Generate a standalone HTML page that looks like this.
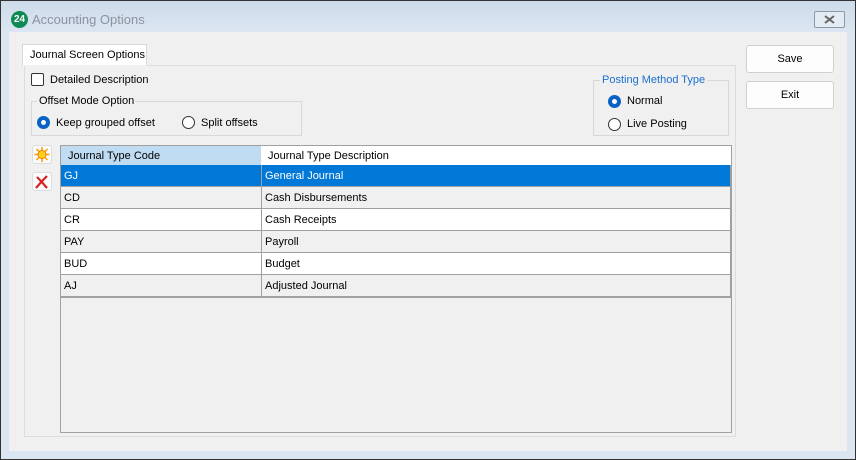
<!DOCTYPE html>
<html><head><style>
*{margin:0;padding:0;box-sizing:border-box}
body{width:856px;height:460px;position:relative;overflow:hidden;font-family:"Liberation Sans",sans-serif;font-size:11px;color:#000;background:#dbe6f2}
.a{position:absolute}
#frame{left:0;top:0;width:856px;height:460px;border:1px solid #333;background:linear-gradient(#cddbea,#dbe6f2 32px,#dbe6f2)}
#client{left:9px;top:32px;width:838px;height:419px;background:#f0f0f0}
.btn{background:#fdfdfd;border:1px solid #d0d0d0;border-radius:3px;text-align:center;line-height:27px;font-size:11px}
.grp{border:1px solid #d8d8d8}
.radio{width:13px;height:13px;border-radius:50%;border:1px solid #333;background:#fff}
.radio.on{border:4px solid #0a63c4;background:#fff}
.row{left:61px;width:670px;height:22px;border-bottom:1px solid #a0a0a0}
.row span{position:absolute;top:5px}
.c1{left:3px}.c2{left:204px}
.vl{position:absolute;left:200px;top:0;width:1px;height:100%;background:#a0a0a0}
</style></head><body>
<div id="frame" class="a"></div>
<div class="a" style="left:11px;top:11px;width:17px;height:17px;border-radius:50%;background:#0f8a55;color:#fff;font-size:10px;font-weight:bold;text-align:center;line-height:17px">24</div>
<div class="a" style="left:32px;top:12px;font-size:13px;color:#8a949e">Accounting Options</div>
<div class="a" style="left:814px;top:11px;width:31px;height:17px;border:1px solid #8a98a8;border-radius:2px;background:#e3ebf3"><svg width="29" height="15" style="position:absolute;left:0;top:0"><path d="M10 4 L19 11 M19 4 L10 11" stroke="#666" stroke-width="2"/></svg></div>
<div id="client" class="a"></div>
<div class="a" style="left:22px;top:44px;width:125px;height:22px;border:1px solid #d8d8d8;border-bottom:none;background:#fff;padding:4px 0 0 7px">Journal Screen Options</div>
<div class="a" style="left:24px;top:65px;width:712px;height:372px;border:1px solid #dcdcdc;background:#f0f0f0"></div>
<div class="a" style="left:24px;top:65px;width:123px;height:1px;background:#f0f0f0"></div>
<div class="a" style="left:31px;top:73px;width:13px;height:13px;border:1px solid #333;border-radius:2px;background:#fff"></div>
<div class="a" style="left:50px;top:74px">Detailed Description</div>
<div class="a grp" style="left:31px;top:101px;width:271px;height:35px"></div>
<div class="a" style="left:37px;top:95px;background:#f0f0f0;padding:0 2px">Offset Mode Option</div>
<div class="a radio on" style="left:37px;top:116px"></div>
<div class="a" style="left:56px;top:117px">Keep grouped offset</div>
<div class="a radio" style="left:182px;top:116px"></div>
<div class="a" style="left:201px;top:117px">Split offsets</div>
<div class="a grp" style="left:593px;top:80px;width:136px;height:56px"></div>
<div class="a" style="left:600px;top:74px;background:#f0f0f0;padding:0 2px;color:#1a6fd0">Posting Method Type</div>
<div class="a radio on" style="left:608px;top:95px"></div>
<div class="a" style="left:627px;top:95px">Normal</div>
<div class="a radio" style="left:608px;top:118px"></div>
<div class="a" style="left:627px;top:118px">Live Posting</div>
<div class="a btn" style="left:746px;top:45px;width:88px;height:28px">Save</div>
<div class="a btn" style="left:746px;top:81px;width:88px;height:28px">Exit</div>
<div class="a" style="left:32px;top:145px;width:20px;height:19px;border:1px solid #ddd;border-radius:3px;background:#fafafa">
<svg width="18" height="17" style="position:absolute;left:0;top:0"><g stroke="#f5a000" stroke-width="1.5"><path d="M9 1V16M1.5 8.5H16.5M3.5 3L14.5 14M14.5 3L3.5 14"/></g><circle cx="9" cy="8.5" r="4" fill="#ffd020" stroke="#f08000"/></svg></div>
<div class="a" style="left:32px;top:172px;width:20px;height:19px;border:1px solid #ddd;border-radius:3px;background:#fafafa">
<svg width="18" height="17" style="position:absolute;left:0;top:0"><path d="M4 4 Q9 9 14 15 M14 3 Q8 9 3 15" stroke="#d42020" stroke-width="2.2" fill="none"/></svg></div>
<div class="a" style="left:60px;top:145px;width:672px;height:288px;border:1px solid #a0a0a0;background:#f0f0f0"></div>
<div class="a" style="left:61px;top:146px;width:200px;height:19px;background:#bfdcf3"></div>
<div class="a" style="left:261px;top:146px;width:470px;height:19px;background:#fff"></div>
<div class="a" style="left:68px;top:150px">Journal Type Code</div>
<div class="a" style="left:268px;top:150px">Journal Type Description</div>
<div class="a row" style="top:165px;background:#0078d7;color:#fff"><span class="c1">GJ</span><div class="vl"></div><span class="c2">General Journal</span></div>
<div class="a row" style="top:187px;background:#f0f0f0"><span class="c1">CD</span><div class="vl"></div><span class="c2">Cash Disbursements</span></div>
<div class="a row" style="top:209px;background:#fff"><span class="c1">CR</span><div class="vl"></div><span class="c2">Cash Receipts</span></div>
<div class="a row" style="top:231px;background:#f0f0f0"><span class="c1">PAY</span><div class="vl"></div><span class="c2">Payroll</span></div>
<div class="a row" style="top:253px;background:#fff"><span class="c1">BUD</span><div class="vl"></div><span class="c2">Budget</span></div>
<div class="a row" style="top:275px;background:#f0f0f0"><span class="c1">AJ</span><div class="vl"></div><span class="c2">Adjusted Journal</span></div>
<div class="a" style="left:730px;top:165px;width:2px;height:133px;background:#a0a0a0"></div>
<div class="a" style="left:61px;top:296px;width:671px;height:2px;background:#a0a0a0"></div>
</body></html>
